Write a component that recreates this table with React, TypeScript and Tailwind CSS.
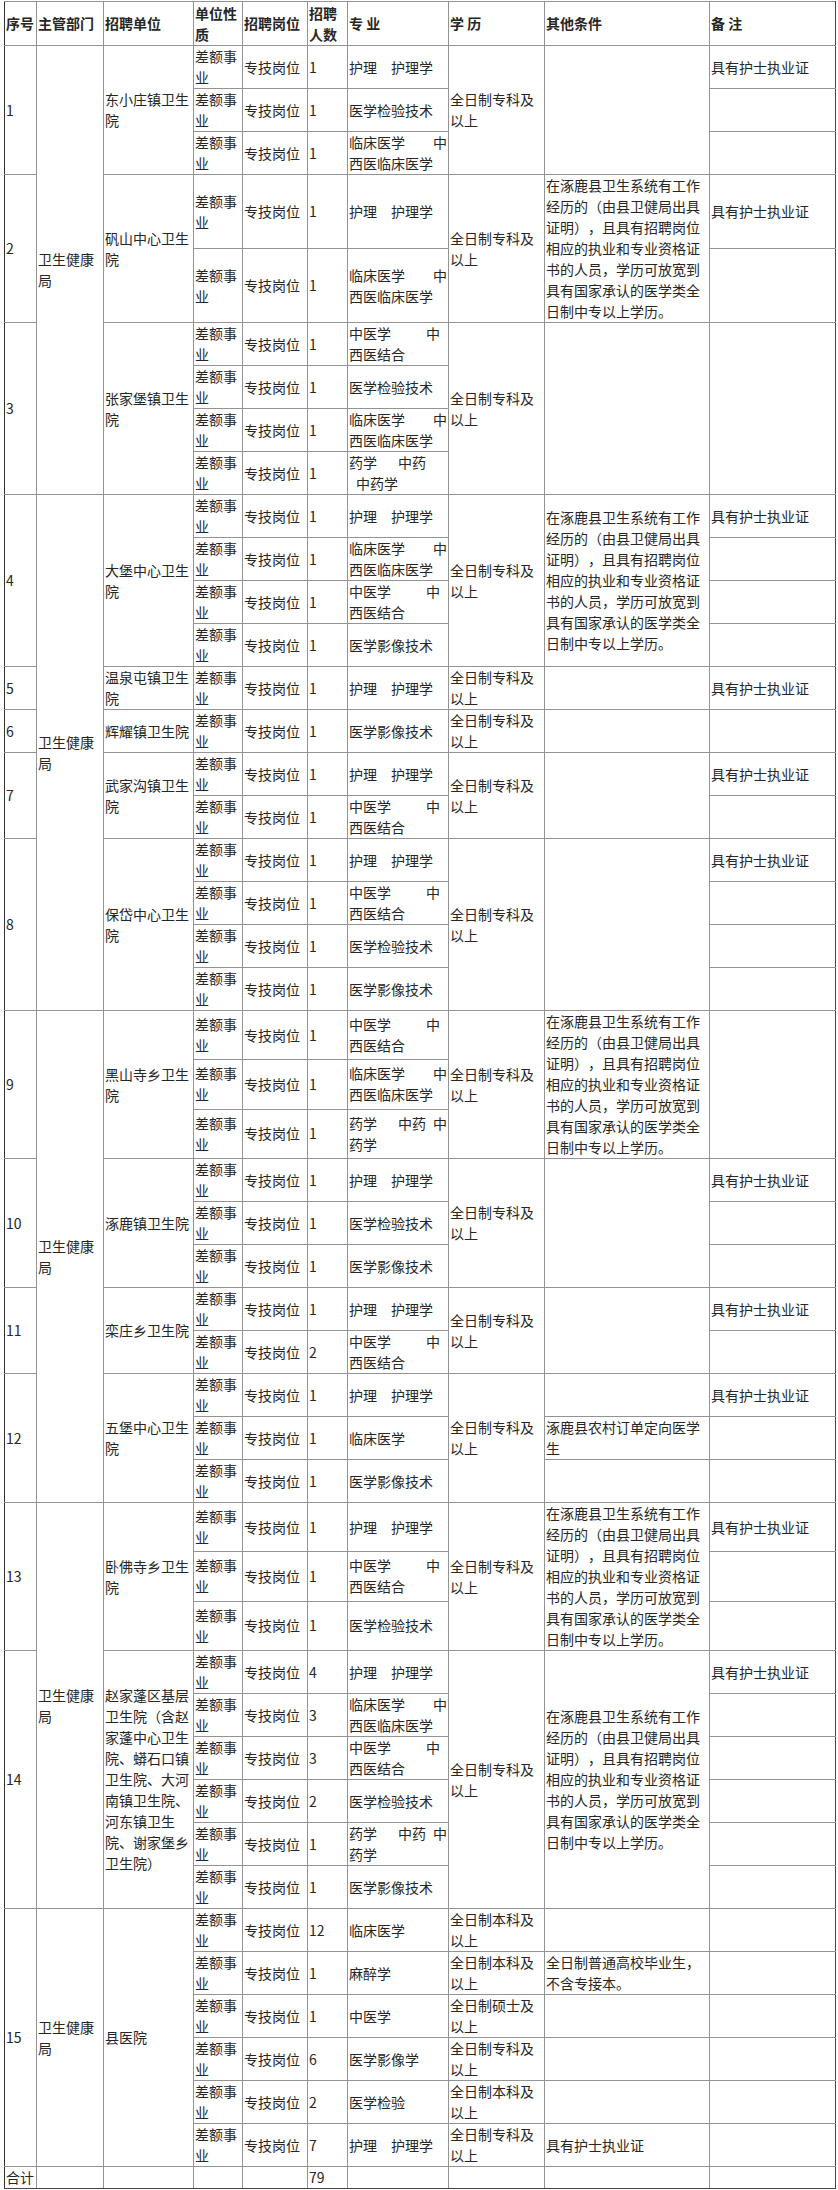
import React from "react";

// 招聘岗位信息表
type Group = {
  no: string;
  unit: string;
  majors: string[];
  counts: string[];
  edu: string | string[];
  other: string | string[];
  note: string | string[];
  dept?: number; // how many groups the 主管部门 cell covers
};

const HL = "护理\u3000护理学";
const JY = "医学检验技术";
const LC = "临床医学\u3000\u3000中\n西医临床医学";
const ZY = "中医学\u3000\u3000\u2002中\n西医结合";
const YX = "医学影像技术";
const YAO3 = "药学\u3000\u2002中药\n\u2002中药学";
const YAO9 = "药学\u3000\u2002中药\u2002中\n药学";
const ZK = "全日制专科及以上";
const BK = "全日制本科及以上";
const HS = "具有护士执业证";
const LONG =
  "在涿鹿县卫生系统有工作经历的（由县卫健局出具证明），且具有招聘岗位相应的执业和专业资格证书的人员，学历可放宽到具有国家承认的医学类全日制中专以上学历。";

const groups: Group[] = [
  { no: "1", dept: 3, unit: "东小庄镇卫生院", majors: [HL, JY, LC], counts: ["1", "1", "1"], edu: ZK, other: "", note: [HS, "", ""] },
  { no: "2", unit: "矾山中心卫生院", majors: [HL, LC], counts: ["1", "1"], edu: ZK, other: LONG, note: [HS, ""] },
  { no: "3", unit: "张家堡镇卫生院", majors: [ZY, JY, LC, YAO3], counts: ["1", "1", "1", "1"], edu: ZK, other: "", note: "" },
  { no: "4", dept: 5, unit: "大堡中心卫生院", majors: [HL, LC, ZY, YX], counts: ["1", "1", "1", "1"], edu: ZK, other: LONG, note: [HS, "", "", ""] },
  { no: "5", unit: "温泉屯镇卫生院", majors: [HL], counts: ["1"], edu: ZK, other: "", note: [HS] },
  { no: "6", unit: "辉耀镇卫生院", majors: [YX], counts: ["1"], edu: ZK, other: "", note: [""] },
  { no: "7", unit: "武家沟镇卫生院", majors: [HL, ZY], counts: ["1", "1"], edu: ZK, other: "", note: [HS, ""] },
  { no: "8", unit: "保岱中心卫生院", majors: [HL, ZY, JY, YX], counts: ["1", "1", "1", "1"], edu: ZK, other: "", note: [HS, "", "", ""] },
  { no: "9", dept: 4, unit: "黑山寺乡卫生院", majors: [ZY, LC, YAO9], counts: ["1", "1", "1"], edu: ZK, other: LONG, note: "" },
  { no: "10", unit: "涿鹿镇卫生院", majors: [HL, JY, YX], counts: ["1", "1", "1"], edu: ZK, other: "", note: [HS, "", ""] },
  { no: "11", unit: "栾庄乡卫生院", majors: [HL, ZY], counts: ["1", "2"], edu: ZK, other: "", note: [HS, ""] },
  { no: "12", unit: "五堡中心卫生院", majors: [HL, "临床医学", YX], counts: ["1", "1", "1"], edu: ZK, other: ["", "涿鹿县农村订单定向医学生", ""], note: [HS, "", ""] },
  { no: "13", dept: 2, unit: "卧佛寺乡卫生院", majors: [HL, ZY, JY], counts: ["1", "1", "1"], edu: ZK, other: LONG, note: [HS, "", ""] },
  {
    no: "14",
    unit: "赵家蓬区基层卫生院（含赵家蓬中心卫生院、蟒石口镇卫生院、大河南镇卫生院、河东镇卫生院、谢家堡乡卫生院）",
    majors: [HL, LC, ZY, JY, YAO9, YX],
    counts: ["4", "3", "3", "2", "1", "1"],
    edu: ZK,
    other: LONG,
    note: [HS, "", "", "", "", ""],
  },
  {
    no: "15",
    dept: 1,
    unit: "县医院",
    majors: ["临床医学", "麻醉学", "中医学", "医学影像学", "医学检验", HL],
    counts: ["12", "1", "1", "6", "2", "7"],
    edu: [BK, BK, "全日制硕士及以上", ZK, BK, ZK],
    other: ["", "全日制普通高校毕业生，不含专接本。", "", "", "", HS],
    note: ["", "", "", "", "", ""],
  },
];

const cell = "border border-[#939393] p-0 pl-px align-middle text-left";
const first = "border-l-[#333]";
const last = "border-r-[#444]";

function deptRows(i: number) {
  const n = groups[i].dept ?? 0;
  return groups.slice(i, i + n).reduce((s, g) => s + g.majors.length, 0);
}

export default function App() {
  return (
    <div
      lang="zh-CN"
      className="bg-white pl-1 pt-px text-[14px] leading-[21px] text-[#262626] font-['Noto_Sans_CJK_SC','Noto_Sans',sans-serif] [text-spacing-trim:space-all]"
    >
      <table className="w-[831px] table-fixed border-collapse">
        <colgroup>
          <col className="w-[32px]" />
          <col className="w-[67px]" />
          <col className="w-[90px]" />
          <col className="w-[49px]" />
          <col className="w-[65px]" />
          <col className="w-[40px]" />
          <col className="w-[101px]" />
          <col className="w-[96px]" />
          <col className="w-[165px]" />
          <col className="w-[126px]" />
        </colgroup>
        <thead>
          <tr className="h-[44px] font-bold">
            <th className={`${cell} ${first}`}>序号</th>
            <th className={cell}>主管部门</th>
            <th className={cell}>招聘单位</th>
            <th className={cell}>单位性质</th>
            <th className={cell}>招聘岗位</th>
            <th className={cell}>招聘人数</th>
            <th className={cell}>专 业</th>
            <th className={cell}>学 历</th>
            <th className={cell}>其他条件</th>
            <th className={`${cell} ${last}`}>备 注</th>
          </tr>
        </thead>
        <tbody>
          {groups.map((g, gi) =>
            g.majors.map((m, i) => {
              const n = g.majors.length;
              return (
                <tr key={`${g.no}-${i}`}>
                  {i === 0 && (
                    <td rowSpan={n} className={`${cell} ${first}`}>
                      {g.no}
                    </td>
                  )}
                  {i === 0 && g.dept && (
                    <td rowSpan={deptRows(gi)} className={cell}>
                      卫生健康局
                    </td>
                  )}
                  {i === 0 && (
                    <td rowSpan={n} className={cell}>
                      {g.unit}
                    </td>
                  )}
                  <td className={cell}>差额事业</td>
                  <td className={cell}>专技岗位</td>
                  <td className={cell}>{g.counts[i]}</td>
                  <td className={`${cell} whitespace-pre-wrap`}>{m}</td>
                  {typeof g.edu === "string" ? (
                    i === 0 && (
                      <td rowSpan={n} className={cell}>
                        {g.edu}
                      </td>
                    )
                  ) : (
                    <td className={cell}>{g.edu[i]}</td>
                  )}
                  {typeof g.other === "string" ? (
                    i === 0 && (
                      <td rowSpan={n} className={cell}>
                        {g.other}
                      </td>
                    )
                  ) : (
                    <td className={cell}>{g.other[i]}</td>
                  )}
                  {typeof g.note === "string" ? (
                    i === 0 && (
                      <td rowSpan={n} className={`${cell} ${last}`}>
                        {g.note}
                      </td>
                    )
                  ) : (
                    <td className={`${cell} ${last}`}>{g.note[i]}</td>
                  )}
                </tr>
              );
            })
          )}
          <tr className="h-[22px]">
            <td className={`${cell} ${first} border-b-[#444]`}>合计</td>
            <td className={`${cell} border-b-[#444]`}></td>
            <td className={`${cell} border-b-[#444]`}></td>
            <td className={`${cell} border-b-[#444]`}></td>
            <td className={`${cell} border-b-[#444]`}></td>
            <td className={`${cell} border-b-[#444]`}>79</td>
            <td className={`${cell} border-b-[#444]`}></td>
            <td className={`${cell} border-b-[#444]`}></td>
            <td className={`${cell} border-b-[#444]`}></td>
            <td className={`${cell} ${last} border-b-[#444]`}></td>
          </tr>
        </tbody>
      </table>
    </div>
  );
}
